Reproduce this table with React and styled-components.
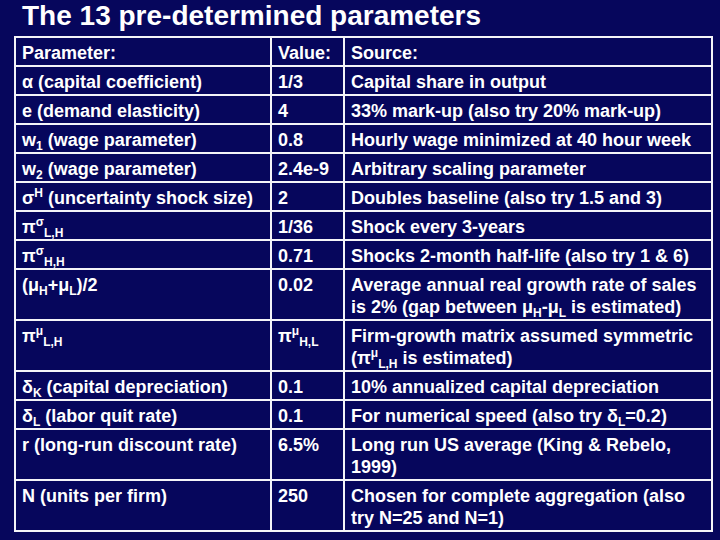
import React from "react";
import styled, { createGlobalStyle } from "styled-components";

const Global = createGlobalStyle`
  html, body { margin: 0; padding: 0; background: #06065c; }
  body { font-family: "Liberation Sans", Arial, sans-serif; color: #fff; }
`;

const Slide = styled.div`
  width: 720px;
  height: 540px;
  box-sizing: border-box;
  padding: 0 8px 0 14px;
  background: #06065c;
  display: flex;
  flex-direction: column;
  overflow: hidden;
`;

const Title = styled.h1`
  margin: 0 0 4px 8px;
  font-size: 28px;
  line-height: 32px;
  font-weight: bold;
  color: #fff;
`;

const Table = styled.table`
  width: 697px;
  table-layout: fixed;
  border-collapse: collapse;
  border: 2px solid #f4f4f8;
`;

const Cell = styled.td`
  border: 2px solid #f4f4f8;
  padding: 4px 4px 1px 6px;
  font-size: 18px;
  line-height: 22px;
  font-weight: bold;
  vertical-align: top;
  color: #fff;
`;

const Sub = styled.sub`
  font-size: 12px;
  line-height: 0;
  vertical-align: -4px;
`;

const Sup = styled.sup`
  font-size: 12px;
  line-height: 0;
  vertical-align: 7px;
`;

const Pi = ({ sup, sub }) => (
  <>
    π<Sup>{sup}</Sup>
    <Sub>{sub}</Sub>
  </>
);

const rows = [
  ["Parameter:", "Value:", "Source:"],
  ["α (capital coefficient)", "1/3", "Capital share in output"],
  ["e (demand elasticity)", "4", "33% mark-up (also try 20% mark-up)"],
  [<>w<Sub>1</Sub> (wage parameter)</>, "0.8", "Hourly wage minimized at 40 hour week"],
  [<>w<Sub>2</Sub> (wage parameter)</>, "2.4e-9", "Arbitrary scaling parameter"],
  [<>σ<Sup>H</Sup> (uncertainty shock size)</>, "2", "Doubles baseline (also try 1.5 and 3)"],
  [<Pi sup="σ" sub="L,H" />, "1/36", "Shock every 3-years"],
  [<Pi sup="σ" sub="H,H" />, "0.71", "Shocks 2-month half-life (also try 1 & 6)"],
  [
    <>(μ<Sub>H</Sub>+μ<Sub>L</Sub>)/2</>,
    "0.02",
    <>Average annual real growth rate of sales is 2% (gap between μ<Sub>H</Sub>-μ<Sub>L</Sub> is estimated)</>,
  ],
  [
    <Pi sup="μ" sub="L,H" />,
    <Pi sup="μ" sub="H,L" />,
    <>Firm-growth matrix assumed symmetric (<Pi sup="μ" sub="L,H" /> is estimated)</>,
  ],
  [<>δ<Sub>K</Sub> (capital depreciation)</>, "0.1", "10% annualized capital depreciation"],
  [<>δ<Sub>L</Sub> (labor quit rate)</>, "0.1", <>For numerical speed (also try δ<Sub>L</Sub>=0.2)</>],
  ["r (long-run discount rate)", "6.5%", "Long run US average (King & Rebelo, 1999)"],
  ["N (units per firm)", "250", "Chosen for complete aggregation (also try N=25 and N=1)"],
];

export default function App() {
  return (
    <>
      <Global />
      <Slide>
        <Title>The 13 pre-determined parameters</Title>
        <Table>
          <colgroup>
            <col style={{ width: 256 }} />
            <col style={{ width: 73 }} />
            <col style={{ width: 368 }} />
          </colgroup>
          <tbody>
            {rows.map((r, i) => (
              <tr key={i}>
                {r.map((c, j) => (
                  <Cell key={j}>{c}</Cell>
                ))}
              </tr>
            ))}
          </tbody>
        </Table>
      </Slide>
    </>
  );
}
